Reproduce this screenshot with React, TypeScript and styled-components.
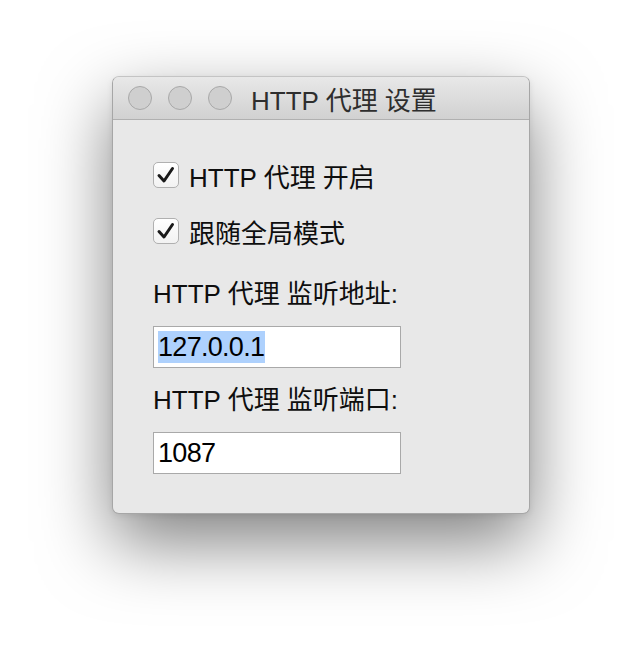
import React from 'react'
import styled, { createGlobalStyle } from 'styled-components'

const GlobalStyle = createGlobalStyle`
  html, body {
    margin: 0;
    padding: 0;
    background: #ffffff;
  }
  body {
    font-family: "Liberation Sans", "Noto Sans CJK SC", sans-serif;
  }
`

const Page = styled.div`
  width: 642px;
  height: 662px;
  display: flex;
  justify-content: center;
  align-items: flex-start;
  padding-top: 76px;
  box-sizing: border-box;
  overflow: hidden;
`

const Window = styled.div`
  width: 418px;
  height: 438px;
  box-sizing: border-box;
  display: flex;
  flex-direction: column;
  background: #e8e8e8;
  border: 1px solid #a6a6a6;
  border-top-color: #c4c4c4;
  border-radius: 7px;
  overflow: hidden;
  box-shadow: 0 28px 70px rgba(0, 0, 0, 0.5), 0 2px 6px rgba(0, 0, 0, 0.08);
`

const TitleBar = styled.div`
  height: 42px;
  flex: 0 0 42px;
  display: flex;
  align-items: center;
  padding-left: 15px;
  background: linear-gradient(#e8e8e8, #d1d1d1);
  border-bottom: 1px solid #b0b0b0;
`

const Lights = styled.div`
  display: flex;
  gap: 16px;
`

const Light = styled.span`
  width: 24px;
  height: 24px;
  box-sizing: border-box;
  border-radius: 50%;
  background: #cfcfcf;
  border: 1px solid #a8a8a8;
`

const Title = styled.div`
  margin-left: 19px;
  font-size: 26px;
  color: #2e2e2e;
  white-space: nowrap;
`

const Content = styled.div`
  display: flex;
  flex-direction: column;
  padding: 42px 0 0 40px;
`

const CheckRow = styled.label<{ $gap?: number }>`
  display: flex;
  align-items: center;
  gap: 10px;
  height: 26px;
  margin-bottom: ${(p) => p.$gap ?? 0}px;
  font-size: 26px;
  color: #0e0e0e;
  white-space: nowrap;
`

const Box = styled.span`
  width: 26px;
  height: 26px;
  box-sizing: border-box;
  border: 1px solid #b0b0b0;
  border-radius: 5px;
  background: linear-gradient(#ffffff, #f2f2f2);
  display: flex;
  align-items: center;
  justify-content: center;
`

const FieldLabel = styled.div`
  font-size: 26px;
  line-height: 28px;
  color: #0e0e0e;
  white-space: nowrap;
  margin-bottom: 18px;
`

const TextField = styled.div`
  width: 248px;
  height: 42px;
  box-sizing: border-box;
  border: 1px solid #a9a9a9;
  background: #ffffff;
  display: flex;
  align-items: center;
  padding-left: 4px;
  font-size: 27px;
  letter-spacing: -0.7px;
  color: #000;
  margin-bottom: 18px;
`

const Selected = styled.span`
  background: #aed1fd;
  line-height: 32px;
  padding-right: 1px;
`

const Check = () => (
  <Box>
    <svg width="20" height="20" viewBox="0 0 20 20">
      <path d="M3 10.5 L8 16 L16.5 3.5" fill="none" stroke="#1a1a1a" strokeWidth="3" strokeLinecap="round" strokeLinejoin="round" />
    </svg>
  </Box>
)

export default function App() {
  return (
    <Page>
      <GlobalStyle />
      <Window>
        <TitleBar>
          <Lights>
            <Light />
            <Light />
            <Light />
          </Lights>
          <Title>HTTP 代理 设置</Title>
        </TitleBar>
        <Content>
          <CheckRow $gap={30}>
            <Check />
            HTTP 代理 开启
          </CheckRow>
          <CheckRow $gap={36}>
            <Check />
            跟随全局模式
          </CheckRow>
          <FieldLabel>HTTP 代理 监听地址:</FieldLabel>
          <TextField>
            <Selected>127.0.0.1</Selected>
          </TextField>
          <FieldLabel>HTTP 代理 监听端口:</FieldLabel>
          <TextField>1087</TextField>
        </Content>
      </Window>
    </Page>
  )
}
